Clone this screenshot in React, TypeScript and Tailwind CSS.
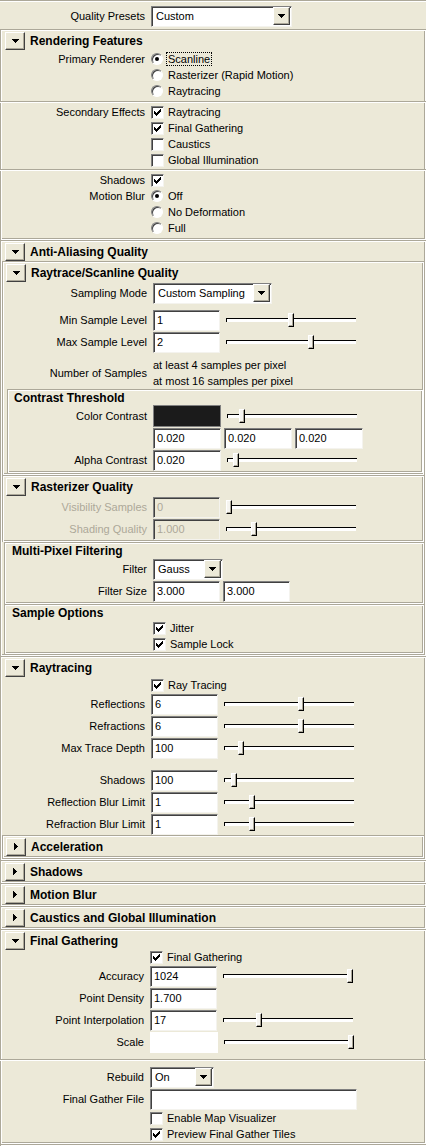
import React from "react";

// Maya-style render settings panel (mental ray quality tab)

const ETCH =
  "shadow-[inset_1px_1px_0_#aca899,inset_-1px_-1px_0_#ffffff,inset_2px_2px_0_#ffffff,inset_-2px_-2px_0_#aca899]";
const SUNKEN =
  "border border-t-[#808080] border-l-[#808080] border-r-[#f4f3ee] border-b-[#f4f3ee] shadow-[inset_1px_1px_0_#404040]";
const RAISED =
  "border border-t-white border-l-white border-r-[#404040] border-b-[#404040] shadow-[inset_-1px_-1px_0_#aca899]";

function TriDown() {
  return (
    <svg width="7" height="4" viewBox="0 0 7 4" shapeRendering="crispEdges">
      <path d="M0 0H7V1H6V2H5V3H4V4H3V3H2V2H1V1H0Z" fill="#000" />
    </svg>
  );
}

function TriRight() {
  return (
    <svg width="4" height="7" viewBox="0 0 4 7" shapeRendering="crispEdges">
      <path d="M0 0V7H1V6H2V5H3V4H4V3H3V2H2V1H1V0Z" fill="#000" />
    </svg>
  );
}

function Frame({ children, className = "" }: { children?: React.ReactNode; className?: string }) {
  return <div className={`${ETCH} py-[2px] ${className}`}>{children}</div>;
}

function Header({ title, open = true, nested = false }: { title: string; open?: boolean; nested?: boolean }) {
  return (
    <div className="flex items-center h-[19px]">
      <div
        className={`${nested ? "ml-[4px]" : "ml-[5px]"} w-[20px] h-[18px] shrink-0 bg-[#ece9d8] ${RAISED} flex items-center justify-center`}
      >
        {open ? <TriDown /> : <TriRight />}
      </div>
      <span className="ml-[5px] font-bold text-[12px] leading-[14px] whitespace-nowrap">{title}</span>
    </div>
  );
}

function Collapsed({ title }: { title: string }) {
  return (
    <Frame>
      <Header title={title} open={false} />
    </Frame>
  );
}

function Box({
  title,
  className = "",
  pad = "pl-[7px]",
  children,
}: {
  title: string;
  className?: string;
  pad?: string;
  children?: React.ReactNode;
}) {
  return (
    <Frame className={className}>
      <div className={`h-[14px] flex items-center font-bold text-[12px] leading-[14px] ${pad}`}>{title}</div>
      {children}
    </Frame>
  );
}

function Sep() {
  return <div className="h-[2px] border-t border-t-[#aca899] border-b border-b-white" />;
}

function Row({
  label = "",
  lw = "w-[151px]",
  h = "h-[22px]",
  disabled = false,
  children,
}: {
  label?: string;
  lw?: string;
  h?: string;
  disabled?: boolean;
  children?: React.ReactNode;
}) {
  return (
    <div className={`flex items-center ${h}`}>
      <div className={`${lw} shrink-0 pr-[6px] text-right whitespace-nowrap ${disabled ? "text-[#aca899]" : ""}`}>
        {label}
      </div>
      {children}
    </div>
  );
}

function Field({
  value = "",
  w = "w-[67px]",
  disabled = false,
}: {
  value?: string;
  w?: string;
  disabled?: boolean;
}) {
  return (
    <div
      className={`${w} h-[21px] shrink-0 ${SUNKEN} ${
        disabled ? "bg-[#ece9d8] text-[#aca899]" : "bg-white"
      } flex items-center pl-[3px]`}
    >
      {value}
    </div>
  );
}

function Slider({ v }: { v: number }) {
  return (
    <div className="relative ml-[6px] w-[130px] h-[14px] shrink-0">
      <div className="absolute left-0 right-0 top-[5px] h-[4px] bg-white border-t border-l border-black" />
      <div
        className="absolute top-0 w-[6px] h-[14px] bg-[#f6f5f0] border border-t-white border-l-white border-r-black border-b-black shadow-[inset_-1px_-1px_0_#aca899]"
        style={{ left: Math.round(v * 124) }}
      />
    </div>
  );
}

const CHECK_RECTS: [number, number, number][] = [
  [6, 0, 1],
  [5, 1, 2],
  [0, 2, 1],
  [4, 2, 3],
  [0, 3, 2],
  [3, 3, 3],
  [0, 4, 5],
  [1, 5, 3],
  [2, 6, 1],
];

function Check({ checked }: { checked?: boolean }) {
  return (
    <div className={`w-[13px] h-[13px] shrink-0 bg-white ${SUNKEN} flex items-center justify-center`}>
      {checked && (
        <svg width="7" height="7" viewBox="0 0 7 7" shapeRendering="crispEdges">
          {CHECK_RECTS.map(([x, y, w], i) => (
            <rect key={i} x={x} y={y} width={w} height={1} fill="#000" />
          ))}
        </svg>
      )}
    </div>
  );
}

function Radio({ on }: { on?: boolean }) {
  return (
    <div className="w-[12px] h-[12px] shrink-0 rounded-full bg-white border border-t-[#808080] border-l-[#808080] border-r-white border-b-white shadow-[inset_1px_1px_0_#404040] flex items-center justify-center">
      {on && <div className="w-[4px] h-[4px] rounded-full bg-black" />}
    </div>
  );
}

function RadioRow({ label = "", text, on, focus }: { label?: string; text: string; on?: boolean; focus?: boolean }) {
  return (
    <Row label={label} h="h-[16px]">
      <Radio on={on} />
      <span
        className={`ml-[3px] px-[1px] leading-[12px] border ${focus ? "border-dotted border-black" : "border-transparent"}`}
      >
        {text}
      </span>
    </Row>
  );
}

function CheckRow({
  label = "",
  text = "",
  checked,
  lw = "w-[151px]",
  h = "h-[16px]",
}: {
  label?: string;
  text?: string;
  checked?: boolean;
  lw?: string;
  h?: string;
}) {
  return (
    <Row label={label} lw={lw} h={h}>
      <Check checked={checked} />
      {text && <span className="ml-[4px] whitespace-nowrap">{text}</span>}
    </Row>
  );
}

function Combo({ value, w }: { value: string; w: string }) {
  return (
    <div className={`${w} h-[21px] shrink-0 bg-white ${SUNKEN} flex items-center`}>
      <span className="flex-1 pl-[4px]">{value}</span>
      <div className={`w-[17px] h-[18px] mr-[1px] shrink-0 bg-[#ece9d8] ${RAISED} flex items-center justify-center`}>
        <TriDown />
      </div>
    </div>
  );
}

export default function App() {
  return (
    <div className="w-[426px] h-[1146px] overflow-hidden bg-[#ece9d8] text-black text-[11px] leading-[13px] font-['Liberation_Sans',Arial,sans-serif]">
      {/* presets */}
      <div className="h-[29px] border-t border-t-[#aca899] shadow-[inset_0_1px_0_#ffffff] flex items-center pt-[2px]">
        <Row label="Quality Presets" h="h-[24px]">
          <Combo value="Custom" w="w-[141px]" />
        </Row>
      </div>

      {/* Rendering Features */}
      <Frame>
        <div className="h-[20px] flex items-center">
          <Header title="Rendering Features" />
        </div>
        <RadioRow label="Primary Renderer" text="Scanline" on focus />
        <RadioRow text="Rasterizer (Rapid Motion)" />
        <RadioRow text="Raytracing" />
        <div className="h-[2px]" />
        <Sep />
        <div className="h-[1px]" />
        <CheckRow label="Secondary Effects" text="Raytracing" checked />
        <CheckRow text="Final Gathering" checked />
        <CheckRow text="Caustics" />
        <CheckRow text="Global Illumination" />
        <div className="h-[1px]" />
        <Sep />
        <div className="h-[1px]" />
        <CheckRow label="Shadows" checked />
        <RadioRow label="Motion Blur" text="Off" on />
        <RadioRow text="No Deformation" />
        <RadioRow text="Full" />
        <div className="h-[2px]" />
      </Frame>

      {/* Anti-Aliasing */}
      <Frame>
        <Header title="Anti-Aliasing Quality" />
        <Frame className="ml-[2px] mr-[2px]">
          <Header title="Raytrace/Scanline Quality" nested />
          <Row label="Sampling Mode">
            <Combo value="Custom Sampling" w="w-[119px]" />
          </Row>
          <div className="h-[5px]" />
          <Row label="Min Sample Level">
            <Field value="1" />
            <Slider v={0.5} />
          </Row>
          <Row label="Max Sample Level">
            <Field value="2" />
            <Slider v={0.66} />
          </Row>
          <div className="h-[4px]" />
          <Row label="Number of Samples" h="h-[32px]">
            <div className="flex flex-col">
              <span className="h-[16px] leading-[16px]">at least 4 samples per pixel</span>
              <span className="h-[16px] leading-[16px]">at most 16 samples per pixel</span>
            </div>
          </Row>
          <Box title="Contrast Threshold" className="ml-[5px] mr-[1px]">
            <Row label="Color Contrast" lw="w-[146px]">
              <div className="w-[68px] h-[22px] shrink-0 bg-[#1b1b1b] border border-[#808080]" />
              <Slider v={0.1} />
            </Row>
            <div className="flex items-center h-[22px] pl-[146px] gap-[3px]">
              <Field value="0.020" w="w-[68px]" />
              <Field value="0.020" w="w-[68px]" />
              <Field value="0.020" w="w-[68px]" />
            </div>
            <Row label="Alpha Contrast" lw="w-[146px]">
              <Field value="0.020" w="w-[68px]" />
              <Slider v={0.05} />
            </Row>
          </Box>
        </Frame>
        <Frame className="ml-[2px] mr-[2px]">
          <Header title="Rasterizer Quality" nested />
          <Row label="Visibility Samples" disabled>
            <Field value="0" disabled />
            <Slider v={0} />
          </Row>
          <Row label="Shading Quality" disabled>
            <Field value="1.000" disabled />
            <Slider v={0.2} />
          </Row>
        </Frame>
        <Box title="Multi-Pixel Filtering" className="ml-[4px] mr-[2px]" pad="pl-[8px]">
          <Row label="Filter" lw="w-[149px]">
            <Combo value="Gauss" w="w-[70px]" />
          </Row>
          <Row label="Filter Size" lw="w-[149px]">
            <div className="flex gap-[3px]">
              <Field value="3.000" />
              <Field value="3.000" />
            </div>
          </Row>
        </Box>
        <Box title="Sample Options" className="ml-[4px] mr-[2px]" pad="pl-[8px]">
          <CheckRow text="Jitter" checked lw="w-[149px]" />
          <CheckRow text="Sample Lock" checked lw="w-[149px]" />
        </Box>
      </Frame>

      {/* Raytracing */}
      <Frame>
        <Header title="Raytracing" />
        <CheckRow text="Ray Tracing" checked />
        <Row label="Reflections">
          <Field value="6" />
          <Slider v={0.6} />
        </Row>
        <Row label="Refractions">
          <Field value="6" />
          <Slider v={0.6} />
        </Row>
        <Row label="Max Trace Depth">
          <Field value="100" />
          <Slider v={0.11} />
        </Row>
        <div className="h-[10px]" />
        <Row label="Shadows">
          <Field value="100" />
          <Slider v={0.06} />
        </Row>
        <Row label="Reflection Blur Limit">
          <Field value="1" />
          <Slider v={0.2} />
        </Row>
        <Row label="Refraction Blur Limit">
          <Field value="1" />
          <Slider v={0.2} />
        </Row>
        <Frame className="ml-[2px] mr-[2px]">
          <Header title="Acceleration" open={false} nested />
        </Frame>
      </Frame>

      <Collapsed title="Shadows" />
      <Collapsed title="Motion Blur" />
      <Collapsed title="Caustics and Global Illumination" />

      {/* Final Gathering */}
      <Frame>
        <Header title="Final Gathering" />
        <CheckRow text="Final Gathering" checked lw="w-[150px]" h="h-[15px]" />
        <Row label="Accuracy" lw="w-[150px]">
          <Field value="1024" />
          <Slider v={1} />
        </Row>
        <Row label="Point Density" lw="w-[150px]">
          <Field value="1.700" />
        </Row>
        <Row label="Point Interpolation" lw="w-[150px]">
          <Field value="17" />
          <Slider v={0.27} />
        </Row>
        <Row label="Scale" lw="w-[150px]">
          <div className="w-[68px] h-[21px] shrink-0 bg-white" />
          <Slider v={1} />
        </Row>
        <div className="h-[6px]" />
        <Sep />
        <div className="h-[5px]" />
        <Row label="Rebuild" lw="w-[150px]">
          <Combo value="On" w="w-[64px]" />
        </Row>
        <Row label="Final Gather File" lw="w-[150px]">
          <Field w="w-[207px]" />
        </Row>
        <CheckRow text="Enable Map Visualizer" lw="w-[150px]" />
        <CheckRow text="Preview Final Gather Tiles" checked lw="w-[150px]" />
      </Frame>

      {/* top edge of the next collapsed section, cut by the window */}
      <div className={`${ETCH} h-[20px] pt-[2px]`}>
        <div className={`ml-[5px] w-[20px] h-[18px] bg-[#ece9d8] ${RAISED}`} />
      </div>
    </div>
  );
}
